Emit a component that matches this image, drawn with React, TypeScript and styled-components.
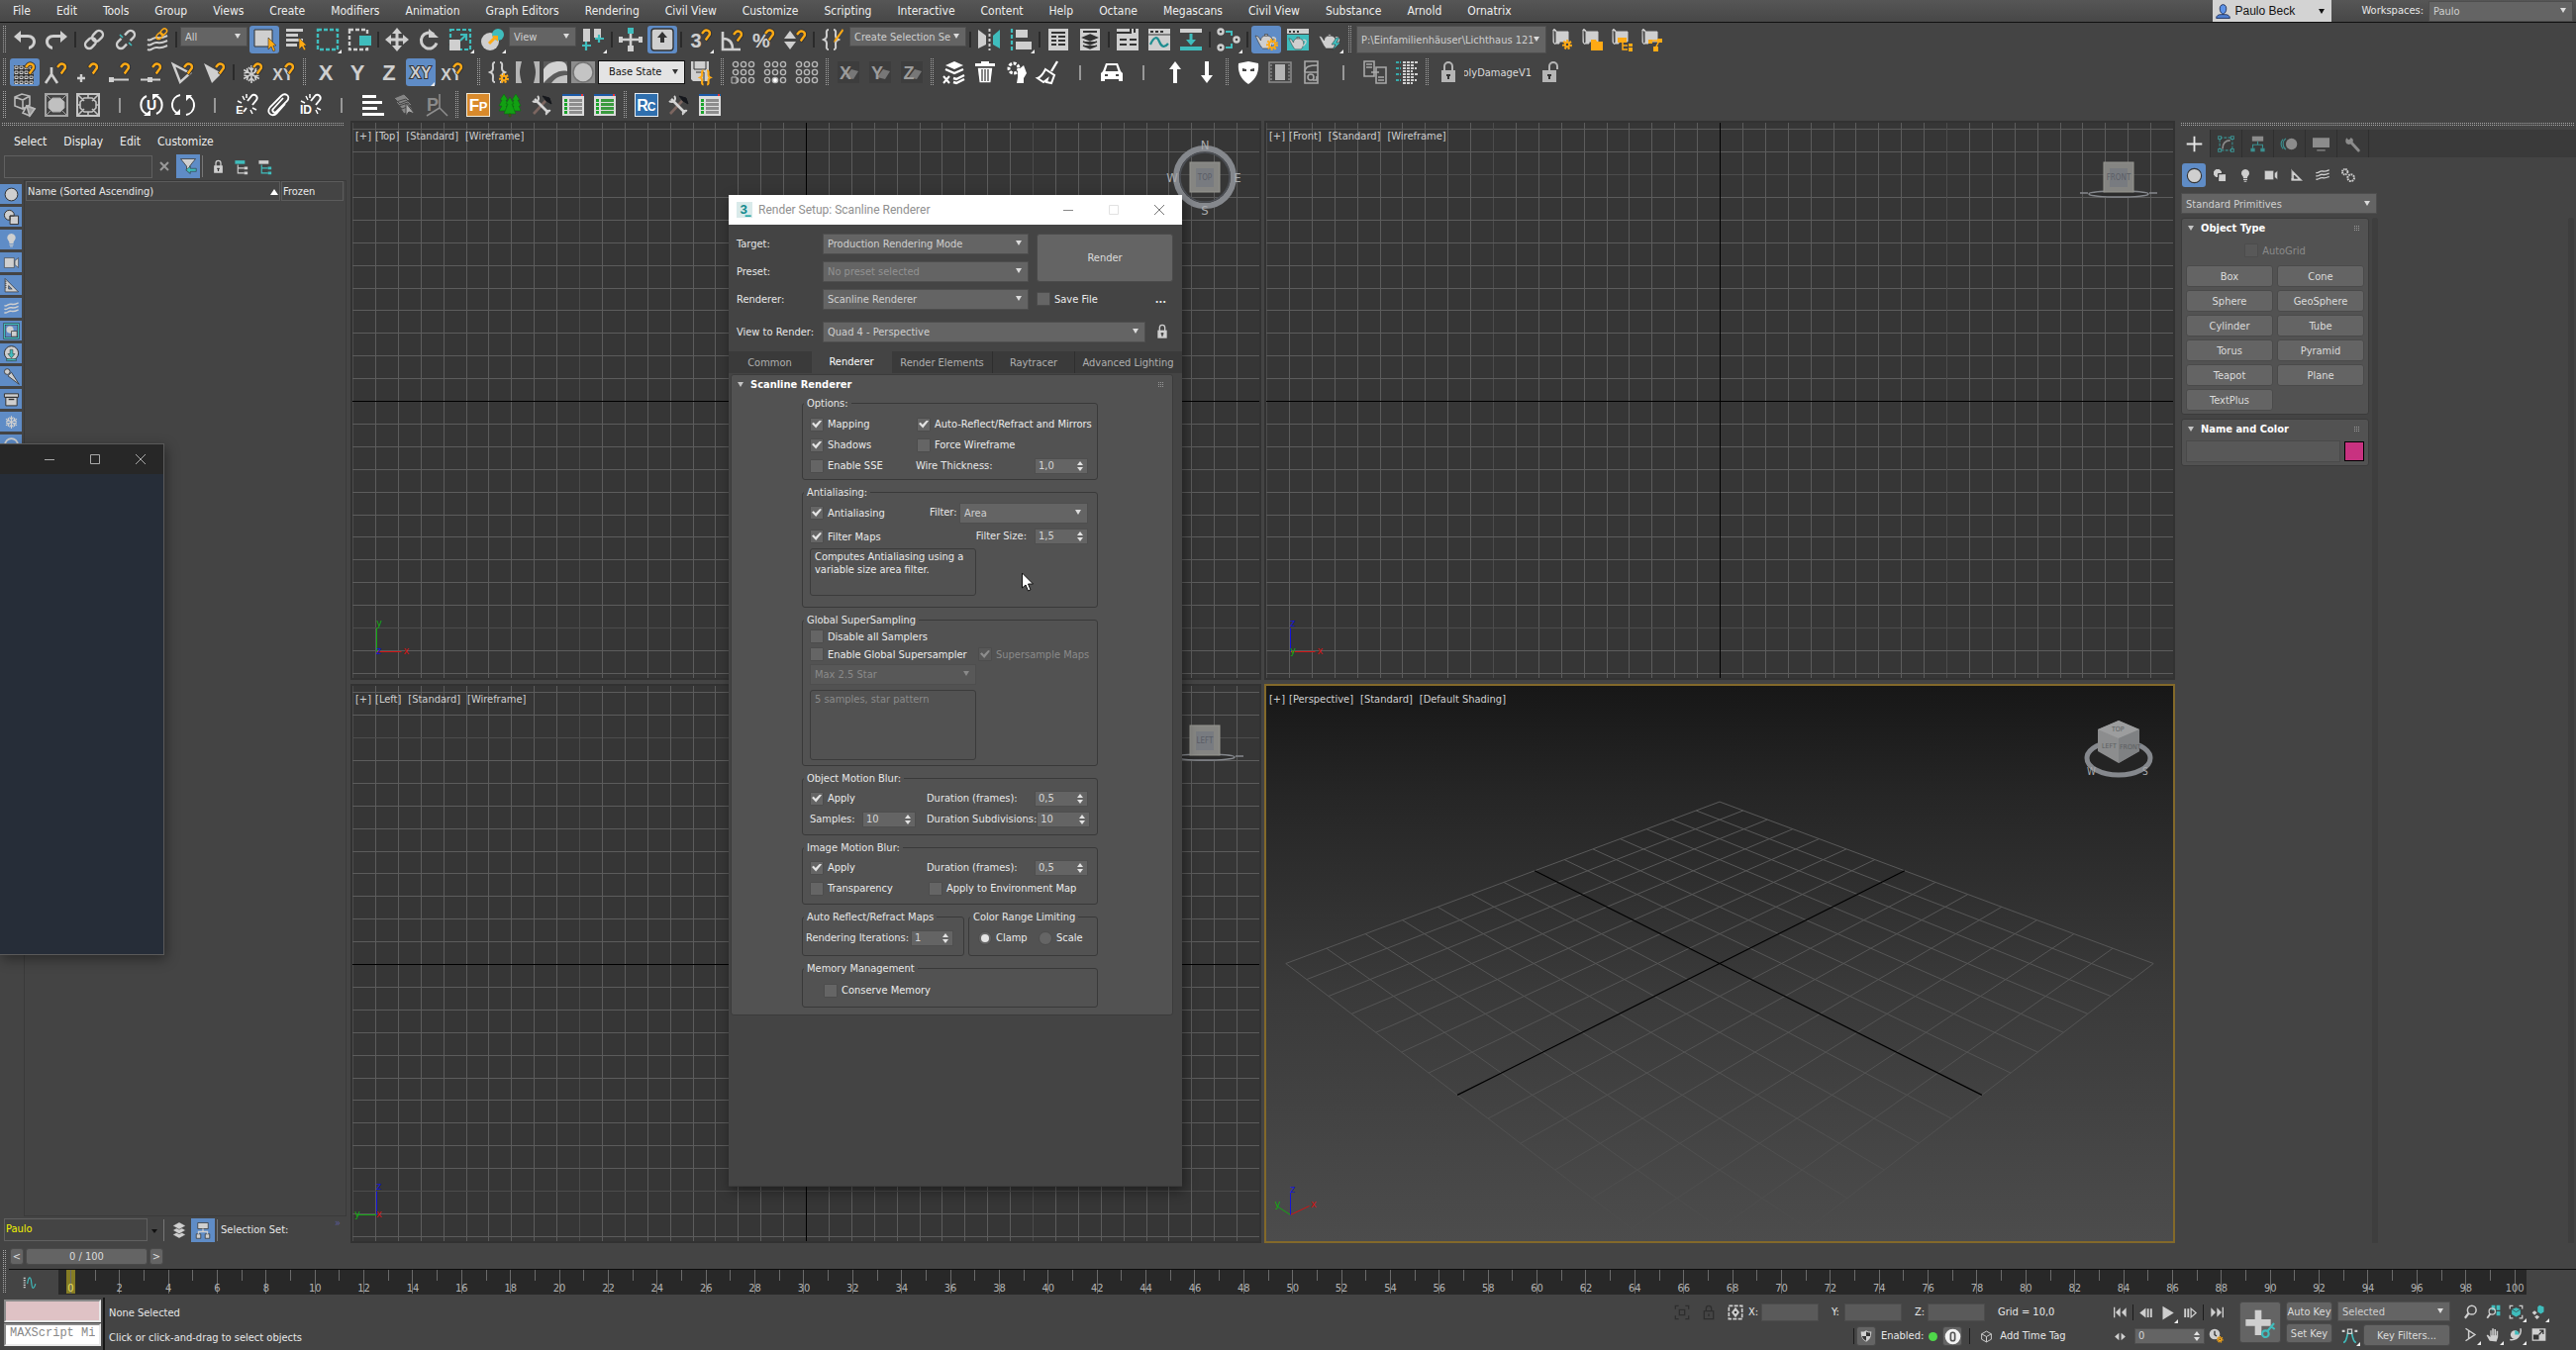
import React from "react";
import styled, { createGlobalStyle, css } from "styled-components";

const L = "#cfcfcf";
const T = "#3fbdbd";
const O = "#ffaa14";
const K = "#333333";
const G = "#8c8c8c";
const UI = `"DejaVu Sans Condensed", "Noto Sans", sans-serif`;

const Global = createGlobalStyle`
  *, *::before, *::after { box-sizing: border-box; }
  body { margin: 0; background: #444; }
  body, button, input, select, table, textarea { font: 11px/14px ${UI}; color: #e8e8e8; }
  button { padding: 0; border: 0; background: none; }
  input { margin: 0; padding: 0; }
  svg { display: block; flex: none; }
`;

/* ---------- icon drawings, all on a 24 unit square ---------- */

const Magnet = () => (
  <g fill="none" strokeLinecap="butt">
    <path d="M12.500 7.500l2.500-3a3.600 3.600 0 0 1 6 3.500l-4.500 6" stroke={K} strokeWidth="4" />
    <path d="M13 7l2.200-2.600a3.400 3.400 0 0 1 5.500 3.600l-4 5.500" stroke={O} strokeWidth="2.400" />
  </g>
);
const Gear = ({ x, y, r = 4 }: { x: number; y: number; r?: number }) => (
  <g transform={`translate(${x} ${y})`}>
    <circle r={r + 1} fill="none" stroke={O} strokeWidth="2" strokeDasharray="2 1.500" />
    <circle r={r - 0.8} fill="none" stroke={O} strokeWidth="2" />
  </g>
);
const Teapot = ({ c = L }: { c?: string }) => (
  <g fill={c} stroke={K} strokeWidth=".6">
    <path d="M1 8l3 1 2.500 4c0-3 2-5 5.500-5s6.500 2 6.500 6c0 3-2 6-3 7H8.500C6 19 4 14 1 8z" />
    <path d="M10.500 6.500h3v1.500h-3z" />
    <path d="M18 10c4-1 5 3 0 7" fill="none" stroke={c} strokeWidth="1.600" />
  </g>
);
const Txt = ({ children, x = 12, y = 19, s = 18, c = L }: { children: string; x?: number; y?: number; s?: number; c?: string }) => (
  <text x={x} y={y} fontSize={s} fontWeight="bold" textAnchor="middle" fill={c} fontFamily="Liberation Sans, sans-serif">{children}</text>
);
const Scroll = () => (
  <path d="M3 3v11c0 3 3 3 3 0V4h12v10H9v2H4M3 3c-1-2 3-2 3 1" fill={L} stroke={L} />
);
const Chain = ({ c = L }: { c?: string }) => (
  <g fill="none" stroke={c} strokeWidth="2.400" transform="rotate(-45 12 12)">
    <rect x="1" y="8" width="12" height="8" rx="4" />
    <rect x="11" y="8" width="12" height="8" rx="4" />
  </g>
);
const Tools = () => (
  <g fill="none" strokeWidth="2.600">
    <path d="M4 21L16 8" stroke="#7c6660" /><path d="M13 3l7 2 2 6-5-3z" fill="#15171c" stroke="#15171c" strokeWidth="1" />
    <path d="M5 6l14 14" stroke="#d4d4d4" /><path d="M3 8a3.500 3.500 0 0 0 5-5M17 22a3 3 0 0 1 4-4" stroke="#d4d4d4" strokeWidth="2" />
  </g>
);
const ListSheet = ({ grid }: { grid?: boolean }) => (
  <g>
    <path d="M1 2h22v21H1z" fill="#dcdcdc" /><path d="M1 1h22v2H1z" fill="#1c5aa8" /><path d="M20 1h2v2h-2z" fill="#e33" />
    {[6, 10, 14, 18].map((y) => (
      <g key={y}>
        <path d={`M3 ${y}h3v3H3z`} fill="#1aa32b" />
        <path d={`M8 ${y}h13v3H8z`} fill={grid ? "#3a9a3f" : "#8d8d8d"} />
      </g>
    ))}
  </g>
);
const Waves = ({ c = L }: { c?: string }) => (
  <g fill="none" stroke={c} strokeWidth="2">
    {[6, 11, 16].map((y) => <path key={y} d={`M2 ${y + 2}c4 2 5-3 10-2s6 0 10-2`} />)}
  </g>
);
const Bulb = () => <path d="M12 3a6 6 0 0 0-4 10.500c1 1 1 2 1 3.500h6c0-1.500 0-2.500 1-3.500A6 6 0 0 0 12 3zM9 18h6v1.500H9zM10 20.500h4V22h-4z" fill={L} />;
const Camera = () => <path d="M2 5h14v14H2zM17 9l5-4v14l-5-4z" fill={L} stroke={K} strokeWidth=".8" />;
const SetSquare = () => <path d="M3 2l19 19H3zM8 12v5h5zM3 6h2M3 9h2M3 12h2M3 15h2" fill={L} fillRule="evenodd" stroke={K} strokeWidth="1" />;
const Shapes = () => (
  <g fill={L} stroke={K} strokeWidth="1.400"><circle cx="9" cy="9" r="7" /><path d="M10 10h12v12H10z" /><path d="M10 16V10h6" fill="none" /></g>
);
const Sheets = ({ c = L }: { c?: string }) => (
  <g fill={c} stroke={K} strokeWidth=".8">
    {[18, 12, 6].map((y) => <path key={y} d={`M12 ${y - 5}l9 5-9 5-9-5z`} />)}
  </g>
);
const Padlock = ({ c = L, open }: { c?: string; open?: boolean }) => (
  <g><path d={open ? "M12 11V6a4 4 0 0 1 8 0v3" : "M8 11V6a4 4 0 0 1 8 0v5"} fill="none" stroke={c} strokeWidth="2" /><path d="M5 10h14v12H5z" fill={c} /><path d="M11 14h2v5h-2zM10 14h4v2h-4z" fill={K} /></g>
);
const Flake = () => (
  <g stroke={L} strokeWidth="1.600" fill="none">
    {[0, 60, 120].map((a) => <path key={a} transform={`rotate(${a} 11 14)`} d="M11 5v18M8 7l3 3 3-3M8 21l3-3 3 3" />)}
  </g>
);
const Dots9 = ({ lit }: { lit?: number }) => (
  <g fill="none" stroke="#b9b9b9" strokeWidth="1.400">
    {[0, 1, 2, 3, 4, 5, 6, 7, 8].map((i) => (
      <circle key={i} cx={4 + (i % 3) * 8} cy={4 + Math.floor(i / 3) * 8} r="2.600" fill={lit === i ? "#fff" : "none"} />
    ))}
  </g>
);
const Plane = ({ a }: { a: string }) => (
  <g><path d="M1 1h22v22H1z" fill="#3d3d3d" /><path d="M9 17l6-8 7 2-5 8z" fill="#777" /><Txt x={9} c="#9b9b9b" s={18}>{a}</Txt></g>
);
const Braces = () => <g fill="none" stroke={L} strokeWidth="2"><path d="M8 2C5 2 6 5 6 8s-1 3-3 4c2 1 3 1 3 4s-1 6 2 6M13 2c3 0 2 3 2 6s1 3 3 4c-2 1-3 1-3 4s1 6-2 6" /></g>;
const Tree = ({ a, b }: { a: string; b: string }) => (
  <g><path d="M2 3h14v5H2z" fill={a} /><path d="M6 9v12h9M6 14h9" fill="none" stroke={b} strokeWidth="1.600" /><path d="M15 12h5v4h-5zM15 19h5v4h-5z" fill={b} /></g>
);

const icons: Record<string, React.ReactNode> = {
  undo: <path d="M1 9l7-6v4h7c5 0 8 3 8 7s-3 7-7 8v-3c3-1 4-3 4-5s-2-4-5-4H8v5z" fill={L} />,
  redo: <path d="M23 9l-7-6v4H9c-5 0-8 3-8 7s3 7 7 8v-3c-3-1-4-3-4-5s2-4 5-4h7v5z" fill={L} />,
  link: <Chain />,
  unlink: <g><Chain /><path d="M5 5l14 14" stroke="#444" strokeWidth="5" /><path d="M6 7l3 3M15 15l3 3" stroke={T} strokeWidth="1.600" /></g>,
  bind: <g><g transform="translate(0 4)"><Waves /></g><g transform="translate(9 -1) scale(.6)"><Chain c={O} /></g></g>,
  selObj: <g><path d="M2 2h18v17H2z" fill={L} stroke={K} /><path d="M16 10v12l3-3 2 5 2-1-2-5h3z" fill={O} stroke={K} strokeWidth=".6" /></g>,
  selName: <g><path d="M2 1h17v3H2zM2 6h12v3H2zM2 11h17v3H2zM2 16h11v3H2z" fill={L} /><path d="M15 10v12l3-3 2 4 2-1-2-4h3z" fill={O} stroke={K} strokeWidth=".6" /></g>,
  region: <path d="M2 2h20v20H2z" fill="none" stroke={T} strokeWidth="2.400" strokeDasharray="4 2" />,
  crossing: <g><path d="M2 2h18v20H2z" fill="none" stroke={L} strokeWidth="2.400" strokeDasharray="4 2" /><path d="M12 8h12v10H12z" fill={T} /></g>,
  move: <path d="M12 0l5 6h-3.500v4.500H18V7l6 5-6 5v-3.500h-4.500V18H17l-5 6-5-6h3.500v-4.500H6V17l-6-5 6-5v3.500h4.500V6H7z" fill={L} />,
  rotate: <g><path d="M17 6.500a8 8 0 1 0 3 9" fill="none" stroke={L} strokeWidth="3" /><path d="M12 1v9h10z" fill={L} /></g>,
  scale: <g><path d="M2 2h20v20H2z" fill="none" stroke={T} strokeWidth="2.200" strokeDasharray="4 2" /><path d="M1 12h11v11H1z" fill={L} /><path d="M12 7h6v6M18 7l-6 6" fill="none" stroke={T} strokeWidth="2.200" /></g>,
  place: <g><circle cx="10" cy="14" r="9" fill={L} /><circle cx="18" cy="7" r="6" fill={T} /><path d="M9 16l6-6" stroke={O} strokeWidth="3" /><path d="M12 8h6v6z" fill={O} /></g>,
  pivot: <g><path d="M2 1h7v13H2zM13 1h7v9h-7z" fill={L} /><path d="M5 14v9M1 18h9M18 7v8M14 11h9" stroke={T} strokeWidth="2.200" /></g>,
  manip: <g><path d="M12 3v19M2 12h20" stroke={L} strokeWidth="2.600" /><path d="M9 0h6v6H9z" fill={T} /><path d="M9 18h6v6H9zM0 9h4v6H0zM20 9h4v6h-4z" fill={L} /></g>,
  kbd: <g><rect x="1" y="1" width="22" height="22" rx="3" fill={L} stroke={K} strokeWidth="1.400" /><path d="M12 4l5 6h-3v5h-4v-5H7z" fill={K} /></g>,
  snap3: <g><Txt x={8} y={20} s={20}>3</Txt><g transform="translate(1 -1)"><Magnet /></g></g>,
  angle: <g><path d="M3 4v18h18M3 11c7 0 10 4 10 11" fill="none" stroke={L} strokeWidth="2.600" /><g transform="translate(1 0)"><Magnet /></g></g>,
  percent: <g><Txt x={10} y={20} s={20}>%</Txt><g transform="translate(1 -1)"><Magnet /></g></g>,
  spinSnap: <g><path d="M7 3l6 8H1zM7 22l6-8H1z" fill={L} /><g transform="translate(1 0)"><Magnet /></g></g>,
  nameSel: <g><Braces /><path d="M22 1l-8 11-1 3 3-2 7-10z" fill={O} /></g>,
  mirror: <g><path d="M1 2l8 6v9l-8 4z" fill={L} /><path d="M23 2l-7 6v9l7 4z" fill={T} /><path d="M12.500 1v22" stroke={L} strokeWidth="2" strokeDasharray="3 2" /></g>,
  align: <g><path d="M3 1v23" stroke={T} strokeWidth="2.200" strokeDasharray="4 2" /><path d="M7 2h12v8H7zM7 14h16v8H7z" fill={L} /></g>,
  table: <g><path d="M2 1h20v22H2z" fill={L} /><path d="M5 5h14M5 9h5M12 9h7M5 13h5M12 13h7M5 17h5M12 17h7" stroke={K} strokeWidth="2" /></g>,
  layerMgr: <g><path d="M2 1h20v22H2z" fill={L} /><path d="M5 4h14" stroke={K} strokeWidth="2" /><path d="M12 7l7 3-7 3-7-3zM5 14l7 3 7-3M5 18l7 3 7-3" fill={K} stroke={K} strokeWidth="1.500" /></g>,
  ribbon: <g><path d="M1 1h22v22H1z" fill={L} /><path d="M1 5h14V1M19 1v4M4 12h7M14 12h7M4 17h7M14 17h7" fill="none" stroke={K} strokeWidth="2" /></g>,
  curve: <g><path d="M1 1h22v22H1z" fill={L} /><path d="M3 3h3v2H3zM8 3h3v2H8zM13 3h3v2h-3z" fill={K} /><path d="M1 7h22" stroke={K} /><path d="M3 17c4-9 7-8 9-3s5 7 9 2" fill="none" stroke="#1f8d90" strokeWidth="2.200" /></g>,
  toggleR: <g><path d="M1 1h22v4H1z" fill={L} /><path d="M1 19h22v4H1z" fill={T} /><path d="M10.500 6h3v6H17l-5 6-5-6h3.500z" fill={T} /></g>,
  schematic: <g fill="none" stroke={L} strokeWidth="2.400"><circle cx="4" cy="4" r="2.500" /><circle cx="20" cy="12" r="2.500" /><circle cx="4" cy="20" r="2.500" /><path d="M9 4h6v4M9 20h6v-4" stroke={T} strokeWidth="2" /></g>,
  rSetup: <g><Teapot /><Gear x={18} y={17} /></g>,
  rFrame: <g><path d="M1 1h22v5H1z" fill={L} /><path d="M3 3h2v2H3zM7 3h2v2H7zM11 3h2v2h-2z" fill={K} /><path d="M1 7h22v16H1z" fill={T} /><g transform="translate(2 4) scale(.85)"><Teapot /></g></g>,
  rGo: <g><Teapot /><path d="M19 10l-5 7h4l-3 6 8-8h-4l3-5z" fill={T} stroke={K} strokeWidth=".5" /></g>,
  scrGear: <g><Scroll /><Gear x={17} y={17} r={3} /></g>,
  scrFolder: <g><Scroll /><path d="M11 12h5l1 2h6v9H11z" fill={O} /></g>,
  scrTree: <g><Scroll /><path d="M8 10h9v5H8zM19 16h4v3h-4zM19 20h4v4h-4z" fill={O} /><path d="M13 15v7h5M13 18h5" stroke={O} strokeWidth="1.500" fill="none" /></g>,
  scrNode: <g><Scroll /><path d="M9 12h4v4H9zM18 11h5v4h-5zM14 19h5v5h-5z" fill={O} /><path d="M12 13h8l-4 8" stroke={O} fill="none" strokeWidth="1.500" /></g>,

  gridSnap: <g><path d="M1 5h20v19H1z" fill={K} />{[6, 11, 16, 21].map((y) => [2, 7, 12, 17].map((x) => <path key={`${x}-${y}`} d={`M${x} ${y}h3v2.500h-3z`} fill="none" stroke={L} />))}<Magnet /></g>,
  pivSnap: <g><path d="M7 7v7l-6 9M7 14l6 9" fill="none" stroke={L} strokeWidth="2.600" /><Magnet /></g>,
  vtxSnap: <g><path d="M5 14v8M1 18h8" stroke={L} strokeWidth="2.400" /><Magnet /></g>,
  endSnap: <g><path d="M1 17h5v5H1z" fill={L} /><path d="M6 19.500h15" stroke={L} strokeWidth="2" /><Magnet /></g>,
  midSnap: <g><path d="M8 17h5v5H8z" fill={L} /><path d="M1 19.500h20" stroke={L} strokeWidth="2" /><Magnet /></g>,
  edgeSnap: <g><path d="M2 4l17 9-10 9z" fill="none" stroke={L} strokeWidth="2.400" /><Magnet /></g>,
  faceSnap: <g><path d="M1 3l18 10-10 10z" fill={L} /><Magnet /></g>,
  frzSnap: <g><Flake /><Magnet /></g>,
  xySnap: <g><Txt x={11} y={20} s={16}>XY</Txt><Magnet /></g>,
  ax: <Txt y={20} s={22}>X</Txt>,
  ay: <Txt y={20} s={22}>Y</Txt>,
  az: <Txt y={20} s={22}>Z</Txt>,
  axy: <text x="12" y="18" fontSize="16" fontWeight="bold" textAnchor="middle" fill={L} stroke={K} strokeWidth="2" paintOrder="stroke" fontFamily="Liberation Sans, sans-serif">XY</text>,
  brGear: <g><Braces /><Gear x={17} y={18} r={3} /></g>,
  brSide: <g><path d="M0 1h6c-1 4-2 8-2 11s1 7 2 11H0zM24 1h-6c1 4 2 8 2 11s-1 7-2 11h6z" fill="#b5b5b5" /></g>,
  swirl: <g><path d="M0 1h24v22H0z" fill="#5b5b5b" /><path d="M0 23V9c4-6 9-8 16-8 8 0 8 6 8 10C16 9 8 14 0 23z" fill="#d2d2d2" /><path d="M8 23c4-6 10-8 16-8v8z" fill="#c2c2c2" /></g>,
  ring: <g><path d="M0 1h24v22H0z" fill="#8d8d8d" /><circle cx="12" cy="12" r="10" fill="#c4c4c4" stroke="#747474" strokeWidth="1.500" /></g>,
  saveBr: <g><path d="M1 1h18v20H3l-2-2z" fill={L} /><path d="M4 1v8h12V1M6 12h8v9" fill="none" stroke={K} /><g transform="translate(8 9) scale(.7)"><path d="M8 2C5 2 6 5 6 8s-1 3-3 4c2 1 3 1 3 4s-1 6 2 6M13 2c3 0 2 3 2 6s1 3 3 4c-2 1-3 1-3 4s1 6-2 6" fill="none" stroke={O} strokeWidth="3" /></g></g>,
  d1: <g><Dots9 /><path d="M0 17h5v6H0z" fill="#444" stroke="#b9b9b9" /></g>, d2: <Dots9 lit={7} />, d3: <Dots9 />,
  px: <Plane a="X" />, py: <Plane a="Y" />, pz: <Plane a="Z" />,
  layX: <g><path d="M13 1l9 4-9 4-9-4z" fill="#fff" /><path d="M4 9l9 4 9-4M12 18l3 1 8-4M12 22l3 1 8-4" fill="none" stroke="#fff" strokeWidth="2.400" /><path d="M2 16l6 7M8 16l-6 7" stroke="#fff" strokeWidth="2" /></g>,
  trash: <g fill="#fff"><path d="M2 3h20v3H2zM8 1h8v2H8z" /><path d="M4 7h16l-2 16H6zM9 9v12M12 9v12M15 9v12" stroke="#444" strokeWidth="1.300" /></g>,
  head: <g><circle cx="9" cy="8" r="5" fill="none" stroke="#fff" strokeWidth="3" strokeDasharray="3 1.500" /><path d="M13 10l6-5 3 8-3 5v5h-7l1-6z" fill="#fff" /></g>,
  broom: <g><path d="M21 1l-6 10" stroke="#fff" strokeWidth="2.400" /><path d="M9 9l9 6-3 8-5-1 1-3-4 3-6-4c4-1 6-5 8-9z" fill="none" stroke="#fff" strokeWidth="2" /></g>,
  bar: <path d="M12 5v15" stroke="#b5b5b5" strokeWidth="1.500" />,
  car: <path d="M6 3h12l3 8 2 2v8h-4v-2H5v2H1v-8l2-2zM7.500 5L5.500 11h13l-2-6zM5 14v2h3v-2zM16 14v2h3v-2z" fill="#fff" fillRule="evenodd" />,
  up: <path d="M12 1l6 8h-4v14h-4V9H6z" fill="#fff" />,
  down: <path d="M12 23l6-8h-4V1h-4v14H6z" fill="#fff" />,
  mask: <path d="M2 3l10-2 10 2c1 8-2 16-10 21C4 19 1 11 2 3zM6 8v3h4V9zM18 8l-4 1v2h4z" fill="#fff" fillRule="evenodd" />,
  clip: <g><path d="M1 2h22v20H1z" fill="none" stroke={G} strokeWidth="1.500" /><path d="M7 4h10v16H7z" fill="#b5b5b5" /><path d="M3 4v16M21 4v16" stroke="#aaa" strokeDasharray="2 1.500" /></g>,
  calc: <g fill="none" stroke="#a8a8a8" strokeWidth="1.600"><path d="M5 1h13v22H5zM5 12h13" /><path d="M5 12C5 6 10 5 18 5" /><circle cx="11" cy="17" r="3" /><path d="M13 20h4v-4" /></g>,
  docs: <g fill="none" stroke="#a8a8a8" strokeWidth="1.600"><path d="M1 1h10v15H1zM13 7h10v16H13zM3 4h6M3 7h6M15 17h6M15 20h6M8 12h8" /></g>,
  listC: <g fill="none" strokeWidth="1.700" strokeDasharray="3 1"><path d="M1 2h5M1 8h5M1 14h5M1 20h5" stroke="#3cc" /><path d="M8 2h15M8 5h11M8 8h14M8 11h10M8 14h15M8 17h12M8 20h14M8 23h10" stroke="#fff" /></g>,
  lock: <Padlock c="#b5b5b5" />, unlock: <Padlock c="#b5b5b5" open />,

  cube3: <g fill="none" stroke="#b9b9b9" strokeWidth="1.600"><path d="M2 4l7-3 8 2v9l-7 4-8-3zM2 4l8 3 7-4M10 7v9M14 13l8 3-5 7-7-3z" /><path d="M14 13l8 3-5 7z" fill="#999" /></g>,
  crys: <g fill="#8b8b8b" stroke="#a5a5a5"><path d="M1 1h22v22H1z" fill="none" strokeWidth="2" /><path d="M1 1l7 7M23 1l-7 7M1 23l7-7M23 23l-7-7" /><path d="M8 5h8l4 4v6l-4 4H8l-4-4V9z" fill="#c0c0c0" /></g>,
  crysO: <g fill="none" stroke="#c4c4c4" strokeWidth="1.600"><path d="M1 1h22v22H1z" strokeWidth="2" /><path d="M1 1l7 7M23 1l-7 7M1 23l7-7M23 23l-7-7M8 5h8l4 4v6l-4 4H8l-4-4V9zM12 1v4M12 19v4M1 12h3M20 12h3" /></g>,
  uRot: <g><path d="M7 3a10 10 0 0 0 0 18M17 21a10 10 0 0 0 0-18" fill="none" stroke="#fff" strokeWidth="2" /><path d="M4 23h7v-6zM20 1h-7v6z" fill="#fff" /><text x="12" y="17" fontSize="14" fontWeight="bold" textAnchor="middle" fill="#fff" fontFamily="Liberation Sans, sans-serif">U</text></g>,
  cRot: <g><path d="M9 2a10 10 0 0 0-2 19M15 22a10 10 0 0 0 2-19" fill="none" stroke="#fff" strokeWidth="2" /><path d="M3 22h6v-6zM21 2h-6v6z" fill="#fff" /></g>,
  chE: <g><path d="M13 8l4-5a3 3 0 0 1 5 4l-4 5M12 15l-3 4" fill="none" stroke="#fff" strokeWidth="2" /><path d="M8 3l2 4M3 8l4 2M16 17l2 4M18 15l4 2M12 1v4" stroke="#fff" strokeWidth="1.500" /><Txt x={5} y={21} s={11} c="#fff">E</Txt></g>,
  chID: <g><path d="M13 8l4-5a3 3 0 0 1 5 4l-4 5" fill="none" stroke="#fff" strokeWidth="2" /><path d="M8 3l2 4M3 8l4 2M18 17l2 4M19 15l4 2M12 1v4" stroke="#fff" strokeWidth="1.500" /><Txt x={8} y={21} s={12} c="#fff">ID</Txt></g>,
  paper: <path d="M17 5L7 16a2 2 0 0 0 3 3L21 8c4-5-2-9-6-5L4 14c-5 6 2 11 7 6l8-9" fill="none" stroke="#fff" strokeWidth="1.800" />,
  lines: <path d="M1 2h14v3H1zM1 8h20v3H1zM1 14h15v3H1zM1 20h22v3H1z" fill="#fff" />,
  stack: <g fill="#858585" stroke="#444"><path d="M1 5l10-4 6 6-10 4zM3 9l10-3 6 6-10 4zM6 13l9-3 5 7-9 4z" /><path d="M13 10v13l3-4 6 2z" fill="#a9a9a9" /></g>,
  pAx: <g><Txt x={8} y={18} s={18} c="#8a8a8a">P</Txt><path d="M15 1v14l-13 8M15 15l8 8" stroke="#8f8f8f" fill="none" strokeWidth="1.500" /></g>,
  fp: <g><path d="M0 0h24v24H0z" fill="#f2ead8" /><path d="M1 1h22v22H1z" fill="#d98a2b" /><Txt x={8} y={18} s={17} c="#fff">F</Txt><Txt x={17} y={18} s={13} c="#fff">P</Txt></g>,
  rc: <g><path d="M0 0h24v24H0z" fill="#e8eef4" /><path d="M1 1h22v22H1z" fill="#2f6fae" /><Txt x={8} y={18} s={16} c="#fff">R</Txt><Txt x={17} y={18} s={12} c="#fff">C</Txt></g>,
  trees: <g fill="#12a012" stroke="#0b6a10" strokeWidth=".6"><path d="M6 1l4 6H8l3 6H8l3 5H1l3-5H1l3-6H2z" /><path d="M18 1l4 6h-2l3 6h-2l2 5H13l3-5h-3l3-6h-2z" /><path d="M12 4l4 7h-2l4 10H6l4-10H8z" /><path d="M11 21h2v3h-2z" fill="#6a3c14" /></g>,
  tools: <Tools />, sheet: <ListSheet />, sheetG: <ListSheet grid />,

  filter: <g><path d="M2 2h20l-8 10v9l-4-4v-5z" fill={L} stroke={K} /><path d="M9 17l6-5v3h8v4h-8v3z" fill={T} stroke={K} strokeWidth=".8" /></g>,
  treeA: <Tree a={T} b={L} />, treeB: <Tree a={L} b={T} />, padlock: <Padlock />,
  sphere: <circle cx="12" cy="12" r="9" fill={L} stroke={K} strokeWidth="1.400" />,
  shapes: <Shapes />, bulb: <Bulb />, camera: <Camera />, square: <SetSquare />, waves: <Waves />,
  group: <g><path d="M2 2h20v20H2z" fill="none" stroke={K} strokeWidth="3" /><path d="M2 2h20v20H2z" fill="none" stroke={T} strokeWidth="1.600" /><circle cx="10" cy="10" r="5" fill={L} /><path d="M12 12h8v8h-8z" fill={L} stroke={K} /></g>,
  xref: <g><circle cx="12" cy="11" r="10" fill={L} stroke={K} strokeWidth="1.400" /><path d="M10 6h4v6h3l-5 6-5-6h3zM5 19h14v3H5z" fill={T} stroke={K} strokeWidth=".8" /></g>,
  bone: <g fill={L} stroke={K} strokeWidth="1.200"><circle cx="6" cy="5" r="4" /><path d="M7 11l5-5 11 17z" /></g>,
  box: <g fill={L} stroke={K} strokeWidth="1.400"><path d="M2 4h20v5H2zM4 9h16v12H4z" /><path d="M8 12h8" strokeWidth="2" /></g>,
  flake: <g transform="translate(1 -2)"><Flake /></g>,
  eye: <g><circle cx="12" cy="12" r="9" fill="none" stroke={L} strokeWidth="2.500" /></g>,
  layers: <Sheets />,
  hier: <g><path d="M5 2h14v8H5zM3 17h6v6H3zM15 17h6v6h-6z" fill={L} stroke={K} /><path d="M12 10v4M6 17v-3h12v3" fill="none" stroke={L} strokeWidth="1.800" /></g>,

  plus: <path d="M12 1v22M1 12h22" stroke="#e6e6e6" strokeWidth="2.600" />,
  modify: <g fill="none"><path d="M3 3h18v18H3z" stroke="#3b8f8f" strokeWidth="1.500" strokeDasharray="4 2" /><path d="M1 1h4v4H1zM19 1h4v4h-4zM1 19h4v4H1zM19 19h4v4h-4z" stroke="#3b8f8f" strokeWidth="1.500" fill="#3a3a3a" /><path d="M7 19c0-8 4-12 11-12" stroke={G} strokeWidth="2.400" /></g>,
  hierT: <g><path d="M4 1h16v7H4z" fill={G} /><path d="M12 8v5M5 18v-5h14v5" fill="none" stroke="#3b8f8f" strokeWidth="1.600" /><path d="M2 18h6v5H2zM16 18h6v5h-6z" fill="#3b8f8f" /></g>,
  motion: <g><circle cx="15" cy="12" r="8" fill={G} /><path d="M7 4a10 10 0 0 0 0 16M3 5a10 10 0 0 0 0 14" fill="none" stroke="#3b8f8f" strokeWidth="1.600" /></g>,
  display: <g fill={G}><path d="M0 3h24v14H0zM6 20h12v2H6z" /></g>,
  wrench: <path d="M3 2l3 3 2-1 1-2c4 1 4 4 3 6l10 11c1 3-2 4-3 3L9 11C5 13 1 10 2 5z" fill={G} transform="translate(0 1)" />,
  gears: <g fill="none" stroke={L}><circle cx="7" cy="7" r="4" strokeWidth="3" strokeDasharray="2.200 1" /><circle cx="16" cy="16" r="5" strokeWidth="3" strokeDasharray="2.600 1.200" /></g>,

  isolate: <g fill="none" stroke="#2e2e2e" strokeWidth="2"><path d="M2 7V2h5M17 2h5v5M22 17v5h-5M7 22H2v-5" /><path d="M8 8h8v8H8z" /></g>,
  lockD: <g fill="none" stroke="#2e2e2e" strokeWidth="2"><path d="M8 10V6a4 4 0 0 1 8 0v4M5 10h14v12H5zM12 14v4" /></g>,
  xform: <g><path d="M2 2h20v20H2z" fill="none" stroke={L} strokeWidth="2.500" strokeDasharray="6 2" /><path d="M12 4l6 8-6 8-6-8z" fill={L} /><circle cx="12" cy="12" r="2" fill={K} /></g>,
  shield: <g><path d="M3 4c4 1 6 0 9-2 3 2 5 3 9 2 0 9-2 14-9 18C5 18 3 13 3 4z" fill={L} /><path d="M12 4v8H5c1 4 3 6 7 8v-8h7V6c-3 0-5 0-7-2z" fill={K} /></g>,
  zero: <g><circle cx="12" cy="12" r="11" fill="#f2f2f2" /><rect x="9" y="6" width="6" height="12" rx="3" fill="none" stroke="#555" strokeWidth="2.400" /></g>,
  tag: <g fill="none" stroke={L} strokeWidth="1.800"><path d="M12 2l9 5v10l-9 5-9-5V7zM3 7l9 5 9-5M12 12v10" /></g>,
  first: <path d="M3 4h2v16H3zM13 5v14l-7-7zM22 5v14l-7-7z" fill={L} />,
  prev: <path d="M12 4v16L2 12zM14 5h3v14h-3zM19 5h3v14h-3z" fill={L} />,
  play: <path d="M4 1l18 11L4 23z" fill={L} />,
  next: <g><path d="M2 5h3v14H2zM7 5h3v14H7z" fill={L} /><path d="M13 5l8 7-8 7z" fill="none" stroke={L} strokeWidth="2" /></g>,
  last: <path d="M19 4h2v16h-2zM11 5v14l7-7zM2 5v14l7-7z" fill={L} />,
  keyMode: <path d="M10 5v14l-8-7zM14 5v14l8-7z" fill={L} />,
  clock: <g><circle cx="9" cy="9" r="8" fill={L} /><path d="M9 4v6l3 2" stroke={K} strokeWidth="2" fill="none" /><Gear x={17} y={17} r={3} /></g>,
  plusKey: <g><path d="M8 2h5v7h7v5h-7v7H8v-7H1V9h7z" fill={L} /><circle cx="16" cy="20" r="2.500" fill="none" stroke={T} strokeWidth="1.600" /><path d="M17.500 18l5-6M21 15l2 1.500" stroke={T} strokeWidth="1.600" /></g>,
  tangent: <g><path d="M3 22C9 20 8 8 10 6M21 22c-6-2-5-14-7-16" fill="none" stroke={T} strokeWidth="2.200" /><path d="M9 3h6v6H9z" fill="none" stroke={L} strokeWidth="1.600" /><path d="M1 4h4v3H1zM19 4h4v3h-4z" fill={L} /></g>,
  zoom: <g fill="none" stroke={L}><circle cx="14" cy="9" r="7" strokeWidth="2.400" /><path d="M9 14l-6 8" strokeWidth="3.400" /></g>,
  zoomAll: <g><path d="M9 1h6v8H9zM17 1h6v8h-6zM17 11h6v7h-6z" fill={T} /><circle cx="10" cy="11" r="5" fill="none" stroke={L} strokeWidth="2" /><path d="M7 15l-5 7" stroke={L} strokeWidth="3" /></g>,
  extents: <g fill="none"><path d="M2 7V2h5M17 2h5v5M22 17v5h-5M7 22H2v-5" stroke={L} strokeWidth="2" /><path d="M12 5l7 3v8l-7 4-7-4V8z" fill={T} /><path d="M5 8l7 4 7-4" stroke={K} /></g>,
  extAll: <g fill={T}><path d="M13 1l7 3v8l-5 3-5-3V4z" /><path d="M5 10l4 3-4 4-4-4zM9 17l4 3-4 4-4-4z" fill={L} /></g>,
  fov: <path d="M4 2l15 10L4 22M9 6v12" fill="none" stroke={L} strokeWidth="2.400" />,
  hand: <path d="M6 22L1 13l2-1 4 4V5h2v8h1V2h2.500v11h1V3H16v10h1V6h2.500v10L17 23z" fill={L} />,
  orbit: <g><circle cx="10" cy="12" r="7" fill={L} /><path d="M10 5v7h7a7 7 0 0 0-7-7z" fill={T} /><path d="M2 20C12 22 22 12 19 2" fill="none" stroke={L} strokeWidth="2.400" /></g>,
  maxi: <g><path d="M1 2h22v20H1z" fill={L} /><path d="M3 12h9v8H3z" fill={K} /><path d="M12 12l7-7M13 5h6v6" stroke={K} strokeWidth="2" fill="none" /></g>,
  miniCurve: <g fill="none"><path d="M3 3v19" stroke={L} strokeWidth="3.500" strokeDasharray="2 2" /><path d="M8 14c2-14 6-14 7-2s4 12 7 2" stroke={T} strokeWidth="2" /></g>,
  user: <g stroke="#1a2a55" strokeWidth="1.400"><path d="M1 23c0-4 3-6 8-6h6c5 0 8 2 8 6z" fill="#4f7fd0" /><path d="M12 1c4 0 6 4 5 9-1 4-3 6-5 6s-4-2-5-6c-1-5 1-9 5-9z" fill="#5d93e8" /></g>,
  max3: <g><path d="M0 0h24v24H0z" fill="#d9eaea" /><Txt x={11} y={18} s={20} c="#128a8f">3</Txt><path d="M13 20h9v2.500h-9z" fill="#2aa7a7" /></g>,
};

const Icon = ({ n, size = 24 }: { n: string; size?: number }) => (
  <svg width={size} height={size} viewBox="0 0 24 24" overflow="visible" aria-hidden="true">{icons[n]}</svg>
);

/* ---------- shared controls ---------- */

const Field = css`background: #646464; border: 1px solid #4e4e4e; color: #d0d0d0;`;

const SelectBox = styled.span<{ $w?: number; $h?: number; $off?: boolean; $white?: boolean }>`
  position: relative;
  display: flex;
  flex: ${(p) => (p.$w ? `0 0 ${p.$w}px` : "1 1 auto")};
  height: ${(p) => p.$h ?? 20}px;
  min-width: 0;
  &::after {
    content: "";
    position: absolute;
    right: 7px;
    top: calc(50% - 3px);
    border: 3px solid transparent;
    border-top: 5px solid ${(p) => (p.$white ? "#333" : p.$off ? "#8a8a8a" : "#dcdcdc")};
    border-bottom: 0;
    pointer-events: none;
  }
  select {
    flex: 1;
    min-width: 0;
    appearance: none;
    border-radius: 0;
    padding: 2px 4px 0;
    ${Field}
    ${(p) => p.$off && "background: #585858; color: #8a8a8a; opacity: 1;"}
    ${(p) => p.$white && "background: #e4e4e4; color: #111; border: 1px solid #111; padding: 0 10px;"}
  }
`;
const DimSelect = styled.select<{ $dim?: boolean }>`
  &&& { ${(p) => p.$dim && "color: #929292;"} }
`;
const Select = ({ value, label, dim, ...box }: { value: string; label: string; w?: number; h?: number; off?: boolean; white?: boolean; dim?: boolean }) => (
  <SelectBox $w={box.w} $h={box.h} $off={box.off} $white={box.white}>
    <DimSelect aria-label={label} disabled={box.off} $dim={dim}><option>{value}</option></DimSelect>
  </SelectBox>
);

const Push = styled.button<{ $on?: boolean }>`
  display: flex;
  align-items: center;
  justify-content: center;
  min-height: 20px;
  padding-top: 1px;
  color: #dcdcdc;
  background: ${(p) => (p.$on ? "#5f8cc6" : "#646464")};
  border: 1px solid #4a4a4a;
  border-radius: 3px;
`;

const CheckLabel = styled.label<{ $off?: boolean }>`
  display: flex;
  align-items: center;
  gap: 4px;
  white-space: nowrap;
  color: ${(p) => (p.$off ? "#8a8a8a" : "#ececec")};
  span { padding-top: 1px; }
`;
const Check = styled.input`
  appearance: none;
  display: grid;
  place-items: center;
  flex: none;
  width: 14px;
  height: 14px;
  background: ${(p) => (p.disabled ? "#585858" : "#656565")};
  border: 1px solid #4c4c4c;
  border-radius: ${(p) => (p.type === "radio" ? "7px" : "1px")};
  &:checked::before {
    content: "";
    width: ${(p) => (p.type === "radio" ? 8 : 10)}px;
    height: 8px;
    background: ${(p) => (p.disabled ? "#8d8d8d" : "#e4e4e4")};
    ${(p) => (p.type === "radio" ? "border-radius: 4px;" : "clip-path: polygon(0 45%, 18% 28%, 38% 55%, 82% 0, 100% 8%, 42% 100%);")}
  }
`;

const SpinBox = styled.span<{ $w: number }>`
  display: flex;
  align-items: center;
  width: ${(p) => p.$w}px;
  height: 16px;
  padding-right: 4px;
  ${Field}
  input {
    flex: 1;
    min-width: 0;
    height: 14px;
    padding: 0 3px;
    border: 0;
    background: transparent;
    color: #d6d6d6;
  }
`;
const Spin = ({ value, label, w = 54 }: { value: string; label: string; w?: number }) => (
  <SpinBox $w={w}>
    <input defaultValue={value} aria-label={label} />
    <svg width="6" height="10" viewBox="0 0 6 10"><path d="M3 0l3 4H0zM3 10l3-4H0z" fill="#e2e2e2" /></svg>
  </SpinBox>
);

const dotsX = css`background: repeating-linear-gradient(90deg, #a5a5a5 0 1px, transparent 1px 2px) 0 0 / 100% 1px no-repeat, repeating-linear-gradient(90deg, #a5a5a5 0 1px, transparent 1px 2px) 0 2px / 100% 1px no-repeat;`;
const DotBar = styled.div`height: 3px; margin: 2px 2px 0; ${dotsX}`;

/* ---------- menu bar ---------- */

const Page = styled.div`
  display: flex;
  flex-direction: column;
  min-height: 100vh;
  position: relative;
  overflow: hidden;
  background: #444;
`;
const MenuBar = styled.header`
  display: flex;
  align-items: stretch;
  height: 23px;
  background: linear-gradient(#565656, #474747);
  border-bottom: 1px solid #111;
`;
const Menus = styled.nav`
  display: flex;
  flex: 1;
  button { padding: 0 13px; color: #eee; font-size: 12px; white-space: nowrap; }
`;
const Account = styled.button`
  display: flex;
  align-items: center;
  gap: 4px;
  width: 120px;
  margin-right: 30px;
  padding: 0 7px 0 3px;
  background: #d3d3d3;
  color: #111;
  font: 12px/14px "Liberation Sans", sans-serif;
  &::after {
    content: "";
    margin-left: auto;
    border: 3px solid transparent;
    border-top: 5px solid #111;
    border-bottom: 0;
  }
`;
const Workspace = styled.label`
  display: flex;
  align-items: center;
  gap: 5px;
  padding-right: 3px;
`;
const menuNames = ["File", "Edit", "Tools", "Group", "Views", "Create", "Modifiers", "Animation", "Graph Editors", "Rendering", "Civil View", "Customize", "Scripting", "Interactive", "Content", "Help", "Octane", "Megascans", "Civil View", "Substance", "Arnold", "Ornatrix"];

/* ---------- tool bars ---------- */

const Bar = styled.div`display: flex; align-items: center; height: 33px;`;
const Handle = styled.i<{ $first?: boolean }>`
  flex: none;
  width: 3px;
  height: 28px;
  margin: ${(p) => (p.$first ? "0 3px" : "0 4px 0 3px")};
  background: repeating-linear-gradient(#a5a5a5 0 1px, transparent 1px 2px) 0 0 / 1px 100% no-repeat, repeating-linear-gradient(#a5a5a5 0 1px, transparent 1px 2px) 2px 0 / 1px 100% no-repeat;
`;
const Divider = styled.i`flex: none; width: 2px; height: 16px; margin: 0 2px; background: #2a2a2a;`;
const Gap = styled.i<{ $w: number }>`flex: none; width: ${(p) => p.$w}px;`;
const Tool = styled.button<{ $on?: boolean; $w: number; $fly?: boolean }>`
  position: relative;
  display: flex;
  align-items: center;
  justify-content: center;
  flex: none;
  width: ${(p) => p.$w}px;
  height: 28px;
  margin: 0 1px;
  border-radius: 3px;
  background: ${(p) => (p.$on ? "#5f8cc6" : "none")};
  ${(p) => p.$fly && css`
    &::after {
      content: "";
      position: absolute;
      right: 1px;
      bottom: 0;
      border: 2px solid transparent;
      border-right-color: #eee;
      border-bottom-color: #eee;
    }
  `}
`;
const SetName = styled.output`
  display: flex;
  justify-content: flex-end;
  width: 68px;
  margin-right: 2px;
  padding-top: 2px;
  overflow: hidden;
  color: #dcdcdc;
`;

/* Tokens: "name" a tool, "*" pressed, "+" with fly-out, "|" divider, ":" handle, "~n" space */
const row1a = "undo redo | link unlink bind |".split(" ");
const row1b = "*selObj selName +region crossing | move rotate +scale +place".split(" ");
const row1c = "+pivot | manip *kbd | +snap3 angle percent spinSnap | nameSel".split(" ");
const row1d = "| mirror +align | table layerMgr | ribbon curve toggleR | +schematic | *rSetup rFrame +rGo :".split(" ");
const row2a = "*gridSnap pivSnap vtxSnap endSnap midSnap edgeSnap faceSnap | frzSnap xySnap : ax ay az *+axy xySnap ~6 :".split(" ");
const row2b = "saveBr : d1 d2 d3 : px py pz : layX trash head broom bar car bar up down : mask clip calc bar docs listC : lock".split(" ");
const row3 = "cube3 crys crysO bar uRot cRot bar chE paper chID bar lines stack pAx : fp trees tools sheet sheetG : rc tools sheet".split(" ");

const Tokens = ({ list, w = 30 }: { list: string[]; w?: number }) => (
  <>
    {list.map((raw, i) => {
      if (raw === "|") return <Divider key={i} />;
      if (raw === ":") return <Handle key={i} />;
      if (raw[0] === "~") return <Gap key={i} $w={Number(raw.slice(1))} />;
      const name = raw.replace(/[*+]/g, "");
      return <Tool key={i} $w={w} $on={raw.includes("*")} $fly={raw.includes("+")} aria-label={name}><Icon n={name} /></Tool>;
    })}
  </>
);
const TopSelect = styled.span<{ $w: number; $mid?: boolean }>`
  display: flex;
  align-self: ${(p) => (p.$mid ? "center" : "flex-start")};
  width: ${(p) => p.$w}px;
  margin: ${(p) => (p.$mid ? "0 1px" : "4px 1px 0")};
`;

const Toolbars = () => (
  <div>
    <Bar>
      <Handle $first />
      <Tokens list={row1a} />
      <TopSelect $w={68}><Select label="Selection filter" value="All" /></TopSelect>
      <Tokens list={row1b} />
      <TopSelect $w={68}><Select label="Reference coordinate system" value="View" /></TopSelect>
      <Tokens list={row1c} />
      <TopSelect $w={118}><Select label="Named selection sets" value="Create Selection Se" /></TopSelect>
      <Tokens list={row1d} />
      <TopSelect $w={192} $mid><Select h={28} label="Project folder" value="P:\Einfamilienhäuser\Lichthaus 121" /></TopSelect>
      <Tokens w={28} list={["scrGear", "scrFolder", "scrTree", "scrNode"]} />
    </Bar>
    <Bar>
      <Handle $first />
      <Tokens list={row2a} />
      <Tokens w={28} list={["brGear"]} />
      <Tokens w={26} list={["brSide", "swirl", "ring"]} />
      <TopSelect $w={88} $mid><Select h={24} white label="State set" value="Base State" /></TopSelect>
      <Tokens list={row2b} />
      <SetName>PolyDamageV1</SetName>
      <Tokens list={["unlock"]} />
    </Bar>
    <Bar>
      <Handle $first />
      <Tokens list={row3} />
    </Bar>
  </div>
);

/* ---------- scene explorer ---------- */

const Work = styled.main`
  display: grid;
  grid-template-columns: 354px 1fr 405px;
  flex: 1;
  min-height: 0;
`;
const Explorer = styled.aside`display: flex; flex-direction: column; padding-right: 4px;`;
const ExplorerMenu = styled.nav`
  display: flex;
  gap: 17px;
  padding: 9px 0 6px 14px;
  button { font-size: 12px; color: #eee; }
`;
const SearchRow = styled.div`
  display: flex;
  align-items: center;
  height: 24px;
  padding-left: 4px;
  input { width: 150px; height: 23px; background: #444; border: 1px solid #606060; }
`;
const FlatTool = styled.button<{ $on?: boolean; $w?: number }>`
  display: flex;
  align-items: center;
  justify-content: center;
  width: ${(p) => p.$w ?? 24}px;
  height: 24px;
  background: ${(p) => (p.$on ? "#5f8cc6" : "none")};
`;
const Rule = styled.i`width: 1px; height: 22px; margin: 0 3px 0 2px; background: #777;`;
const ExplorerBody = styled.div`display: flex; flex: 1; margin-top: 2px;`;
const Filters = styled.div`
  display: flex;
  flex-direction: column;
  gap: 3px;
  width: 24px;
  padding-top: 4px;
  button { display: flex; justify-content: center; align-items: center; width: 22px; height: 20px; background: #5f8cc6; }
`;
const ListArea = styled.div`flex: 1; border: 1px solid #3a3a3a; padding-right: 1px;`;
const Columns = styled.table`
  width: 100%;
  border-spacing: 1px 0;
  th {
    height: 20px;
    padding: 1px 1px 0;
    text-align: left;
    font-weight: normal;
    border: 1px solid #5c5c5c;
  }
  th:last-child { width: 63px; }
`;
const HeadCell = styled.span`
  display: flex;
  align-items: center;
  justify-content: space-between;
  &::after { content: ""; border: 4px solid transparent; border-bottom: 6px solid #fff; border-top: 0; }
`;
const SetRow = styled.div`
  display: flex;
  align-items: center;
  height: 27px;
  padding-left: 4px;
  input { width: 145px; height: 23px; padding: 0 1px 3px; background: #444; border: 1px solid #606060; color: #f2f200; }
`;
const Caret = styled.i`margin: 2px 4px 0; border: 3px solid transparent; border-top: 4px solid #111; border-bottom: 0;`;
const More = styled.span`align-self: flex-start; margin: 0 6px 0 auto; color: #5a5a9a;`;

const SceneExplorer = () => (
  <Explorer>
    <DotBar />
    <ExplorerMenu>{["Select", "Display", "Edit", "Customize"].map((m) => <button key={m}>{m}</button>)}</ExplorerMenu>
    <SearchRow>
      <input aria-label="Find" />
      <FlatTool aria-label="Clear"><svg width="12" height="12" viewBox="0 0 12 12"><path d="M2 2l8 8M10 2l-8 8" stroke="#9a9a9a" strokeWidth="2" /></svg></FlatTool>
      <FlatTool $on aria-label="Filter"><Icon n="filter" size={18} /></FlatTool>
      <Rule />
      <FlatTool aria-label="Lock"><Icon n="padlock" size={15} /></FlatTool>
      <FlatTool aria-label="Hierarchy"><Icon n="treeA" size={17} /></FlatTool>
      <FlatTool aria-label="Children"><Icon n="treeB" size={17} /></FlatTool>
    </SearchRow>
    <ExplorerBody>
      <Filters>
        {["sphere", "shapes", "bulb", "camera", "square", "waves", "group", "xref", "bone", "box", "flake", "eye"].map((n) => (
          <button key={n} aria-label={n}><Icon n={n} size={17} /></button>
        ))}
      </Filters>
      <ListArea>
        <Columns><thead><tr><th><HeadCell>Name (Sorted Ascending)</HeadCell></th><th>Frozen</th></tr></thead></Columns>
      </ListArea>
    </ExplorerBody>
    <SetRow>
      <input aria-label="Layer" defaultValue="Paulo" />
      <Caret />
      <Rule />
      <FlatTool aria-label="Layers"><Icon n="layers" size={18} /></FlatTool>
      <FlatTool $on aria-label="Hierarchy view"><Icon n="hier" size={18} /></FlatTool>
      <Rule />
      <span>Selection Set:</span>
      <More>»</More>
    </SetRow>
  </Explorer>
);

/* ---------- viewports ---------- */

const Viewports = styled.section`
  display: grid;
  grid-template: 1fr 1fr / 1fr 1fr;
  gap: 4px 3px;
`;
const View = styled.div<{ $active?: boolean }>`
  position: relative;
  overflow: hidden;
  border: 2px solid ${(p) => (p.$active ? "#83692a" : "#323232")};
  background: ${(p) => (p.$active ? "linear-gradient(#171717, #262626 20%, #3a3a3a 55%, #4c4c4c)" : "#363636")};
`;
const Canvas = styled.svg`position: absolute; inset: 0; width: 100%; height: 100%;`;
const ViewLabels = styled.div`
  position: relative;
  display: flex;
  gap: 7px;
  padding: 7px 3px;
  button { color: #d0d0d0; }
  button:first-child { margin-right: -3px; }
`;
const Gizmo = styled.svg`position: absolute; left: 0; bottom: 9px;`;
const Cube = styled.svg`position: absolute; right: 9px; top: 7px;`;

const STEP = 22.9;
const OrthoGrid = () => (
  <Canvas>
    <svg x="50%" y="50%" overflow="visible" shapeRendering="crispEdges">
      {Array.from({ length: 81 }, (_, i) => i - 40).map((k) => {
        const p = Math.round(k * STEP);
        const c = k % 10 === 0 ? "#4c4c4c" : "#5c5c5c";
        return k === 0 ? null : (
          <g key={k} fill={c}>
            <rect x={p} y="-700" width="1" height="1400" />
            <rect x="-1200" y={p} width="2400" height="1" />
          </g>
        );
      })}
      <rect x="0" y="-700" width="1" height="1400" />
      <rect x="-1200" y="0" width="2400" height="1" />
    </svg>
  </Canvas>
);

/* Projects a point of the home grid to the screen, relative to the view's centre. */
const project = (u: number, v: number) => {
  const t = u + v;
  const w = 1 - 0.0247 * t;
  return [(31.3 * (u - v)) / w, (973.4 - 8.34 * t) / w - 973.4];
};
const segment = (a: number[], b: number[]) => `M${a[0].toFixed(1)} ${a[1].toFixed(1)}L${b[0].toFixed(1)} ${b[1].toFixed(1)}`;
const homeLines = Array.from({ length: 15 }, (_, i) => i - 7).filter(Boolean)
  .map((k) => segment(project(k, -7), project(k, 7)) + segment(project(-7, k), project(7, k))).join("");
const homeAxes = segment(project(0, -7), project(0, 7)) + segment(project(-7, 0), project(7, 0));

const PerspectiveGrid = () => (
  <Canvas>
    <defs>
      <linearGradient id="fade" gradientUnits="userSpaceOnUse" x1="0" y1="-165" x2="0" y2="285">
        <stop offset="0" stopColor="#5a5a5a" /><stop offset=".6" stopColor="#535353" /><stop offset="1" stopColor="#4b4b4b" />
      </linearGradient>
    </defs>
    <svg x="50%" y="50%" overflow="visible">
      <path d={homeLines} stroke="url(#fade)" fill="none" />
      <path d={homeAxes} stroke="#000" fill="none" strokeWidth="1.200" />
    </svg>
  </Canvas>
);

type Arm = [string, number, number];
const axisColor: Record<string, string> = { x: "#d01414", y: "#12a812", z: "#1414d8" };
const Axes = ({ arms }: { arms: Arm[] }) => (
  <Gizmo width="60" height="60" viewBox="0 0 60 60" fontSize="11">
    {arms.map(([a, dx, dy]) => (
      <g key={a}>
        <path d={`M24.500 42.500l${dx} ${dy}`} stroke={axisColor[a]} />
        <text x={24 + dx * 1.1} y={45 + dy * 1.15} fill={axisColor[a]}>{a}</text>
      </g>
    ))}
  </Gizmo>
);

const FaceCube = ({ name, compass }: { name: string; compass?: boolean }) => (
  <Cube width="92" height="92" viewBox="0 0 92 92">
    {compass ? (
      <g>
        <circle cx="46" cy="48" r="29" fill="none" stroke="#85888d" strokeWidth="6" />
        <circle cx="46" cy="48" r="25" fill="none" stroke="#4c4f55" strokeWidth="1.500" />
        <g fill="#a9abad" fontSize="13" textAnchor="middle"><text x="46" y="20">N</text><text x="46" y="86">S</text><text x="13" y="53">W</text><text x="79" y="53">E</text></g>
      </g>
    ) : (
      <g><ellipse cx="46" cy="65" rx="30" ry="3" fill="#2c2c2c" stroke="#85888d" strokeWidth="1.500" /><path d="M7 64h8M77 64h8" stroke="#85888d" strokeWidth="1.500" /></g>
    )}
    <rect x="31" y="33" width="30" height="30" fill="#858582" stroke="#96968f" />
    <rect x="37" y="39" width="18" height="19" fill="#787b80" />
    <text x="46" y="51" fontSize="8" textAnchor="middle" fill="#5a5d66">{name}</text>
  </Cube>
);
const HomeCube = () => (
  <Cube width="92" height="92" viewBox="0 0 92 92">
    <ellipse cx="46" cy="66" rx="32" ry="17" fill="#242424" stroke="#85888d" strokeWidth="5" />
    <g fill="#a9abad" fontSize="10"><text x="14" y="83">W</text><text x="70" y="83">S</text></g>
    <path d="M46 28l21 9v22L46 71 25 59V37z" fill="#8c8d8e" />
    <path d="M46 28l21 9-21 9-21-9z" fill="#9c9d9e" />
    <path d="M46 46l21-9v22L46 71z" fill="#7f8183" />
    <g fill="#5b5d60" fontSize="7"><text x="29" y="56">LEFT</text><text x="47" y="57">FRONT</text><text x="39" y="39">TOP</text></g>
  </Cube>
);

const Labels = ({ parts }: { parts: string[] }) => (
  <ViewLabels>{["+", ...parts].map((p) => <button key={p}>{`[${p}]`}</button>)}</ViewLabels>
);

const ViewportArea = () => (
  <Viewports>
    <View><OrthoGrid /><Labels parts={["Top", "Standard", "Wireframe"]} /><FaceCube name="TOP" compass /><Axes arms={[["x", 25, 0], ["y", 0, -24], ["z", 0, 0]]} /></View>
    <View><OrthoGrid /><Labels parts={["Front", "Standard", "Wireframe"]} /><FaceCube name="FRONT" /><Axes arms={[["x", 25, 0], ["z", 0, -24], ["y", 0, 0]]} /></View>
    <View><OrthoGrid /><Labels parts={["Left", "Standard", "Wireframe"]} /><FaceCube name="LEFT" /><Axes arms={[["y", -20, 0], ["z", 0, -24], ["x", 0, 0]]} /></View>
    <View $active><PerspectiveGrid /><Labels parts={["Perspective", "Standard", "Default Shading"]} /><HomeCube /><Axes arms={[["x", 19, -9], ["y", -14, -9], ["z", 0, -22]]} /></View>
  </Viewports>
);

/* ---------- command panel ---------- */

const Command = styled.aside`display: flex; flex-direction: column; padding-left: 4px;`;
const CommandTabs = styled.div`
  display: flex;
  height: 28px;
  margin-top: 4px;
  background: #3a3a3a;
`;
const CommandTab = styled.button<{ $on?: boolean }>`
  display: flex;
  align-items: center;
  justify-content: center;
  width: 32px;
  background: ${(p) => (p.$on ? "#444" : "none")};
  border-right: 1px solid #2f2f2f;
`;
const Kinds = styled.div`display: flex; gap: 2px; padding: 6px 3px;`;
const Kind = styled(FlatTool)`border-radius: 3px;`;
const CommandBody = styled.div`
  display: flex;
  flex: 1;
  justify-content: space-between;
`;
const Rollouts = styled.div`
  display: flex;
  flex-direction: column;
  gap: 4px;
  width: 190px;
  margin-left: 2px;
`;
const Strip = styled.i<{ $push?: boolean }>`width: 6px; background: #3e3e3e; border-radius: 3px 3px 0 0; ${(p) => (p.$push ? "margin: 0 2px 0 auto;" : "margin-left: 3px;")}`;
const Rollout = styled.section`background: #525252; border: 1px solid #3b3b3b; border-radius: 3px;`;
const RolloutHead = styled.h2`
  display: flex;
  align-items: center;
  gap: 7px;
  height: 21px;
  margin: 0;
  padding: 0 8px 2px 6px;
  font-size: 11px;
  line-height: 14px;
  color: #fff;
  &::before { content: ""; border: 3px solid transparent; border-top: 5px solid #c4c4c4; border-bottom: 0; }
`;
const Grip = styled.i`
  width: 6px;
  height: 6px;
  margin-left: auto;
  background: repeating-linear-gradient(90deg, transparent 0 1px, #525252 1px 2px), repeating-linear-gradient(#999 0 1px, #525252 1px 2px);
`;
const TypeGrid = styled.div`
  display: grid;
  grid-template-columns: 1fr 1fr;
  gap: 3px 4px;
  padding: 4px 4px 3px;
  button { height: 22px; }
`;
const AutoGrid = styled.div`display: flex; justify-content: center; height: 22px;`;
const NameRow = styled.div`
  display: flex;
  gap: 4px;
  padding: 0 4px 3px;
  input { flex: 1; min-width: 0; height: 22px; background: #585858; border: 1px solid #4a4a4a; }
`;
const Swatch = styled.button`width: 20px; height: 20px; margin-top: 1px; background: #c83280; border: 1px solid #000;`;
const KindSelect = styled.div`display: flex; width: 198px; margin: 0 0 4px 2px;`;

const CommandPanel = () => (
  <Command>
    <DotBar />
    <CommandTabs>{["plus", "modify", "hierT", "motion", "display", "wrench"].map((n, i) => <CommandTab key={n} $on={i === 0} aria-label={n}><Icon n={n} size={17} /></CommandTab>)}</CommandTabs>
    <Kinds>{["sphere", "shapes", "bulb", "camera", "square", "waves", "gears"].map((n, i) => <Kind key={n} $on={i === 0} aria-label={n}><Icon n={n} size={i ? 16 : 19} /></Kind>)}</Kinds>
    <KindSelect><Select h={21} label="Category" value="Standard Primitives" /></KindSelect>
    <CommandBody>
      <Rollouts>
        <Rollout>
          <RolloutHead>Object Type<Grip /></RolloutHead>
          <AutoGrid><CheckLabel $off><Check type="checkbox" disabled /><span>AutoGrid</span></CheckLabel></AutoGrid>
          <TypeGrid>{["Box", "Cone", "Sphere", "GeoSphere", "Cylinder", "Tube", "Torus", "Pyramid", "Teapot", "Plane", "TextPlus"].map((n) => <Push key={n}>{n}</Push>)}</TypeGrid>
        </Rollout>
        <Rollout>
          <RolloutHead>Name and Color<Grip /></RolloutHead>
          <NameRow><input aria-label="Object name" /><Swatch aria-label="Object color" /></NameRow>
        </Rollout>
      </Rollouts>
      <Strip />
      <Strip $push />
    </CommandBody>
  </Command>
);

/* ---------- time line and status ---------- */

const TimeLine = styled.section`display: flex; height: 52px;`;
const TimeHandle = styled(Handle)`height: 44px; margin: 7px 3px 0;`;
const TimeBody = styled.div`flex: 1; min-width: 0;`;
const SliderRow = styled.div`
  display: flex;
  gap: 2px;
  height: 26px;
  padding: 5px 1px;
  button { height: 17px; min-height: 0; width: 14px; }
  button:nth-child(2) { width: 123px; }
`;
const RulerRow = styled.div`
  display: flex;
  height: 26px;
  border-top: 1px solid #0e0e0e;
  padding-right: 50px;
`;
const CurveButton = styled.button`display: flex; align-items: center; justify-content: center; width: 50px; flex: none; padding-right: 8px;`;
const Ruler = styled.div`
  display: flex;
  flex: 1;
  min-width: 0;
  background: #282828;
`;
const Frame = styled.div<{ $even: boolean; $now?: boolean }>`
  display: flex;
  flex: 1 1 0;
  flex-direction: column;
  align-items: center;
  justify-content: flex-end;
  min-width: 0;
  line-height: 12px;
  white-space: nowrap;
  color: ${(p) => (p.$now ? "#e6dc60" : "#b4b4b4")};
  background: linear-gradient(#6a6a6a, #6a6a6a) center 0 / 1px ${(p) => (p.$even ? 24 : 11)}px no-repeat${(p) => p.$now && ", linear-gradient(#857c24, #857c24) center 0 / 9px 24px no-repeat"};
`;
const Status = styled.footer`display: flex; height: 56px;`;
const Listener = styled.div`
  display: flex;
  flex-direction: column;
  gap: 1px;
  width: 98px;
  margin: 5px 2px 0 4px;
  input {
    height: 23px;
    width: 98px;
    padding: 0 4px 4px;
    border: 2px solid #e9e9e9;
    border-top-color: #8a8a8a;
    border-left-color: #8a8a8a;
    background: #fff;
    color: #888;
    font: 12px/14px "Liberation Mono", monospace;
  }
  input:first-child { background: #dfc2c5; }
`;
const Prompt = styled.div`
  flex: 1;
  margin-top: 3px;
  padding: 9px 0 0 4px;
  border-left: 2px solid #161616;
  p { margin: 0 0 11px; }
`;
const Stack = styled.div<{ $w?: number }>`
  display: flex;
  flex-direction: column;
  flex: none;
  width: ${(p) => (p.$w ? `${p.$w}px` : "auto")};
  padding-top: 6px;
`;
const Line = styled.div<{ $ml?: number }>`
  display: flex;
  align-items: center;
  height: 24px;
  margin-left: ${(p) => p.$ml ?? 0}px;
`;
const Coord = styled.label`
  display: flex;
  align-items: center;
  justify-content: space-between;
  width: 71px;
  margin-right: 13px;
  input { width: 58px; height: 18px; background: #5a5a5a; border: 1px solid #4c4c4c; }
`;
const Small = styled(Tool)`height: 22px; margin: 0;`;
const SmallPush = styled(Push)`width: 20px; height: 20px; padding: 0;`;
const Dot = styled.i`width: 9px; height: 9px; border-radius: 5px; background: #4fd84a; margin: 0 5px;`;
const TimeRule = styled.i`width: 1px; height: 16px; margin: 0 2px 0 1px; background: #1c1c1c;`;
const KeyButton = styled(Push)`width: 42px; height: 42px; margin: 7px 0 0 10px;`;
const KeyStack = styled.div`
  display: flex;
  flex-direction: column;
  gap: 2px;
  margin: 7px 0 0 5px;
  button { width: 47px; height: 20px; white-space: nowrap; }
`;
const FilterStack = styled.div`
  width: 114px;
  margin: 7px 0 0 5px;
  display: flex;
  flex-direction: column;
  gap: 3px;
`;
const FilterLine = styled.div`display: flex; gap: 2px; ${Push} { flex: 1; }`;
const NavGrid = styled.div`
  display: grid;
  grid-template-columns: repeat(4, 23px);
  gap: 1px 0;
  align-content: start;
  margin: 6px 26px 0 9px;
`;

const Bottom = () => (
  <>
    <TimeLine>
      <TimeHandle />
      <TimeBody>
        <SliderRow><Push aria-label="Previous frame">&lt;</Push><Push>0 / 100</Push><Push aria-label="Next frame">&gt;</Push></SliderRow>
        <RulerRow>
          <CurveButton aria-label="Mini curve editor"><Icon n="miniCurve" size={14} /></CurveButton>
          <Ruler>{Array.from({ length: 101 }, (_, i) => <Frame key={i} $even={i % 2 === 0} $now={i === 0}>{i % 2 === 0 ? i : null}</Frame>)}</Ruler>
        </RulerRow>
      </TimeBody>
    </TimeLine>
    <Status>
      <Listener><input aria-label="Macro recorder" /><input aria-label="Listener" defaultValue="MAXScript Mini" /></Listener>
      <Prompt><p>None Selected</p><p>Click or click-and-drag to select objects</p></Prompt>
      <Stack $w={444}>
        <Line>
          {["isolate", "lockD", "xform"].map((n) => <Small key={n} $w={27} aria-label={n}><Icon n={n} size={16} /></Small>)}
          {["X:", "Y:", "Z:"].map((n) => <Coord key={n}>{n}<input /></Coord>)}
          <span>Grid = 10,0</span>
        </Line>
        <Line $ml={186}>
          <TimeRule /><SmallPush aria-label="Safe scene"><Icon n="shield" size={14} /></SmallPush>
          <Gap $w={5} /><span>Enabled:</span><Dot />
          <SmallPush aria-label="Security count"><Icon n="zero" size={17} /></SmallPush>
          <Gap $w={6} /><TimeRule /><Small $w={28} aria-label="Tag"><Icon n="tag" size={13} /></Small><span>Add Time Tag</span>
        </Line>
      </Stack>
      <Stack $w={123}>
        <Line>
          <Small $w={24} aria-label="Go to start"><Icon n="first" size={16} /></Small><TimeRule />
          <Small $w={21} aria-label="Previous"><Icon n="prev" size={15} /></Small>
          <Small $w={23} $fly aria-label="Play"><Icon n="play" size={15} /></Small>
          <Small $w={23} aria-label="Next"><Icon n="next" size={15} /></Small><TimeRule />
          <Small $w={24} aria-label="Go to end"><Icon n="last" size={16} /></Small>
        </Line>
        <Line>
          <Small $w={24} aria-label="Key mode"><Icon n="keyMode" size={13} /></Small><Gap $w={3} />
          <Spin w={71} value="0" label="Current frame" />
          <Small $w={24} aria-label="Time configuration"><Icon n="clock" size={16} /></Small>
        </Line>
      </Stack>
      <KeyButton aria-label="Set keys"><Icon n="plusKey" size={32} /></KeyButton>
      <KeyStack><Push>Auto Key</Push><Push>Set Key</Push></KeyStack>
      <FilterStack>
        <Select w={20} label="Key target" value="Selected" />
        <FilterLine><Small $w={24} $fly aria-label="Tangents"><Icon n="tangent" size={17} /></Small><Push>Key Filters...</Push></FilterLine>
      </FilterStack>
      <NavGrid>
        {["zoom", "zoomAll", "+extents", "+extAll", "+fov", "+hand", "+orbit", "maxi"].map((n) => (
          <Small key={n} $w={23} $fly={n[0] === "+"} aria-label={n}><Icon n={n.replace("+", "")} size={15} /></Small>
        ))}
      </NavGrid>
    </Status>
  </>
);

/* ---------- floating windows ---------- */

const DarkWindow = styled.div`
  position: absolute;
  left: 0;
  top: 448px;
  width: 166px;
  height: 517px;
  background: #262d38;
  border: 1px solid #5a5a5a;
  border-left: 0;
  box-shadow: 2px 4px 12px rgba(0, 0, 0, 0.4);
`;
const DarkTitle = styled.div`
  display: flex;
  justify-content: flex-end;
  height: 30px;
  background: #272727;
  button { display: flex; align-items: center; justify-content: center; width: 46px; }
`;
const WinGlyph = ({ kind, color }: { kind: "min" | "max" | "close"; color: string }) => (
  <svg width="12" height="12" viewBox="0 0 12 12">
    <path d={kind === "min" ? "M1 6.500h10" : kind === "max" ? "M1.500 1.500h9v9h-9z" : "M1 1l10 10M11 1L1 11"} fill="none" stroke={color} />
  </svg>
);
const Dialog = styled.section`
  position: absolute;
  left: 736px;
  top: 197px;
  width: 458px;
  height: 1002px;
  background: #444;
  border-bottom: 1px solid #3a3a3a;
  box-shadow: 2px 4px 12px rgba(0, 0, 0, 0.45);
`;
const DialogTitle = styled.header`
  display: flex;
  align-items: center;
  height: 30px;
  padding-left: 8px;
  background: #fff;
  color: #8f8f8f;
  h1 { flex: 1; margin: 0 0 0 6px; font: 12px/16px Roboto, sans-serif; color: #8f8f8f; }
  button { display: flex; align-items: center; justify-content: center; width: 46px; height: 30px; }
`;
const Setup = styled.div`
  display: grid;
  grid-template-columns: 87px 208px 1fr;
  grid-template-rows: 28px 28px 28px 38px;
  padding: 5px 9px 1px 8px;
  align-items: center;
`;
const SetupLabel = styled.span`padding-top: 2px; white-space: nowrap;`;
const RenderButton = styled(Push)`grid-column: 3; grid-row: 1 / 3; height: 49px; margin-left: 8px;`;
const SaveLine = styled.div`
  display: flex;
  justify-content: space-between;
  padding: 0 7px 0 8px;
  button { font-weight: bold; padding-top: 2px; }
`;
const WideSelect = styled.div`display: flex; grid-column: 2 / 4; align-items: center; gap: 9px; padding-right: 3px;`;
const Tabs = styled.div`
  display: flex;
  height: 22px;
  background: #3a3a3a;
  button { padding-top: 2px; color: #b0b0b0; white-space: nowrap; }
`;
const TabButton = styled.button<{ $w: number; $on?: boolean; $line?: boolean }>`
  flex: 0 0 ${(p) => p.$w}px;
  &&& { ${(p) => p.$on && "background: #444; color: #fff; padding-top: 0;"} }
  border-right: 1px solid ${(p) => (p.$line ? "#2e2e2e" : "transparent")};
`;
const Scanline = styled(Rollout)`
  width: 447px;
  margin: 1px 0 0 2px;
  padding-bottom: 7px;
`;
const Groups = styled.div`
  display: flex;
  flex-direction: column;
  gap: 5px;
  width: 299px;
  margin-left: 71px;
`;
const GroupFrame = styled.fieldset`
  min-width: 0;
  margin: 0;
  padding: 0;
  border: 1px solid #393939;
  border-radius: 3px;
  legend { margin-left: 1px; padding: 1px 3px 0; line-height: 13px; }
`;
const GroupBody = styled.div<{ $pad: string }>`padding: ${(p) => p.$pad};`;
const Group = ({ title, pad, children }: { title: string; pad: string; children: React.ReactNode }) => (
  <GroupFrame><legend>{title}</legend><GroupBody $pad={pad}>{children}</GroupBody></GroupFrame>
);
const Row = styled.div<{ $h?: number; $cols: string }>`
  display: grid;
  grid-template-columns: ${(p) => p.$cols};
  align-items: center;
  height: ${(p) => p.$h ?? 21}px;
  white-space: nowrap;
`;
const Note = styled.div<{ $h: number; $off?: boolean }>`
  width: 168px;
  height: ${(p) => p.$h}px;
  padding: 1px 4px;
  line-height: 13px;
  border: 1px solid #3b3b3b;
  border-radius: 3px;
  color: ${(p) => (p.$off ? "#8a8a8a" : "#ececec")};
  ${(p) => p.$off && "margin-top: 5px; padding-top: 2px;"}
`;
const Pair = styled.div`
  display: grid;
  grid-template-columns: 164px 131px;
  gap: 4px;
`;
const Right = styled.span`text-align: right; padding-right: 8px;`;
const Pointer = styled.svg`position: absolute; left: 1031px; top: 578px;`;

const Tick = ({ text, on, off, radio }: { text: string; on?: boolean; off?: boolean; radio?: boolean }) => (
  <CheckLabel $off={off}><Check type={radio ? "radio" : "checkbox"} name={radio ? "range" : undefined} defaultChecked={on} disabled={off} /><span>{text}</span></CheckLabel>
);

const RenderSetup = () => (
  <Dialog>
    <DialogTitle>
      <Icon n="max3" size={16} />
      <h1>Render Setup: Scanline Renderer</h1>
      <button aria-label="Minimize"><WinGlyph kind="min" color="#888" /></button>
      <button aria-label="Maximize"><WinGlyph kind="max" color="#e2e2e2" /></button>
      <button aria-label="Close"><WinGlyph kind="close" color="#777" /></button>
    </DialogTitle>
    <Setup>
      <SetupLabel>Target:</SetupLabel><Select h={21} label="Target" value="Production Rendering Mode" />
      <SetupLabel>Preset:</SetupLabel><Select h={21} dim label="Preset" value="No preset selected" />
      <RenderButton>Render</RenderButton>
      <SetupLabel>Renderer:</SetupLabel><Select h={21} label="Renderer" value="Scanline Renderer" />
      <SaveLine><Tick text="Save File" /><button aria-label="Browse">...</button></SaveLine>
      <SetupLabel>View to Render:</SetupLabel>
      <WideSelect><Select h={21} label="View to Render" value="Quad 4 - Perspective" /><Icon n="padlock" size={16} /></WideSelect>
    </Setup>
    <Tabs>
      <TabButton $w={84}>Common</TabButton>
      <TabButton $w={81} $on>Renderer</TabButton>
      <TabButton $w={102} $line>Render Elements</TabButton>
      <TabButton $w={83} $line>Raytracer</TabButton>
      <TabButton $w={108}>Advanced Lighting</TabButton>
    </Tabs>
    <Scanline>
      <RolloutHead>Scanline Renderer<Grip /></RolloutHead>
      <Groups>
        <Group title="Options:" pad="4px 9px 3px 7px">
          <Row $cols="108px 1fr"><Tick text="Mapping" on /><Tick text="Auto-Reflect/Refract and Mirrors" on /></Row>
          <Row $cols="108px 1fr"><Tick text="Shadows" on /><Tick text="Force Wireframe" /></Row>
          <Row $cols="107px 1fr 54px"><Tick text="Enable SSE" /><span>Wire Thickness:</span><Spin value="1,0" label="Wire Thickness" /></Row>
        </Group>
        <Group title="Antialiasing:" pad="2px 9px 11px 7px">
          <Row $h={24} $cols="121px 30px 130px"><Tick text="Antialiasing" on /><span>Filter:</span><Select h={21} label="Filter" value="Area" /></Row>
          <Row $h={24} $cols="120px 1fr 54px"><Tick text="Filter Maps" on /><Right>Filter Size:</Right><Spin value="1,5" label="Filter Size" /></Row>
          <Note $h={48}>Computes Antialiasing using a variable size area filter.</Note>
        </Group>
        <Group title="Global SuperSampling" pad="1px 9px 5px 7px">
          <Row $h={18} $cols="1fr"><Tick text="Disable all Samplers" /></Row>
          <Row $h={18} $cols="170px 1fr"><Tick text="Enable Global Supersampler" /><Tick text="Supersample Maps" on off /></Row>
          <Row $h={22} $cols="168px"><Select h={21} off label="Sampler" value="Max 2.5 Star" /></Row>
          <Note $h={71} $off>5 samples, star pattern</Note>
        </Group>
        <Group title="Object Motion Blur:" pad="3px 9px 5px 7px">
          <Row $cols="118px 1fr 54px"><Tick text="Apply" on /><span>Duration (frames):</span><Spin value="0,5" label="Duration (frames)" /></Row>
          <Row $cols="53px 65px 1fr 54px"><span>Samples:</span><Spin value="10" label="Samples" /><span>Duration Subdivisions:</span><Spin value="10" label="Duration Subdivisions" /></Row>
        </Group>
        <Group title="Image Motion Blur:" pad="3px 9px 5px 7px">
          <Row $cols="118px 1fr 54px"><Tick text="Apply" on /><span>Duration (frames):</span><Spin value="0,5" label="Duration (frames)" /></Row>
          <Row $cols="120px 1fr"><Tick text="Transparency" /><Tick text="Apply to Environment Map" /></Row>
        </Group>
        <Pair>
          <Group title="Auto Reflect/Refract Maps" pad="4px 10px 7px 3px">
            <Row $cols="1fr 43px"><span>Rendering Iterations:</span><Spin w={43} value="1" label="Rendering Iterations" /></Row>
          </Group>
          <Group title="Color Range Limiting" pad="4px 9px 7px 9px">
            <Row $cols="61px 1fr"><Tick radio text="Clamp" on /><Tick radio text="Scale" /></Row>
          </Group>
        </Pair>
        <Group title="Memory Management" pad="5px 9px 6px 21px">
          <Row $cols="1fr"><Tick text="Conserve Memory" /></Row>
        </Group>
      </Groups>
    </Scanline>
  </Dialog>
);

export default function App() {
  return (
    <Page>
      <Global />
      <MenuBar>
        <Menus>{menuNames.map((m, i) => <button key={i}>{m}</button>)}</Menus>
        <Account><Icon n="user" size={15} />Paulo Beck</Account>
        <Workspace>Workspaces:<Select w={146} h={21} label="Workspaces" value="Paulo" /></Workspace>
      </MenuBar>
      <Toolbars />
      <Work>
        <SceneExplorer />
        <ViewportArea />
        <CommandPanel />
      </Work>
      <Bottom />
      <DarkWindow>
        <DarkTitle>
          <button aria-label="Minimize window"><WinGlyph kind="min" color="#aaa" /></button>
          <button aria-label="Maximize window"><WinGlyph kind="max" color="#aaa" /></button>
          <button aria-label="Close window"><WinGlyph kind="close" color="#aaa" /></button>
        </DarkTitle>
      </DarkWindow>
      <RenderSetup />
      <Pointer width="14" height="21" viewBox="0 0 14 21"><path d="M1.500 1v15l3.500-3 2.500 6 2.500-1-2.500-6h5z" fill="#fff" stroke="#111" /></Pointer>
    </Page>
  );
}
